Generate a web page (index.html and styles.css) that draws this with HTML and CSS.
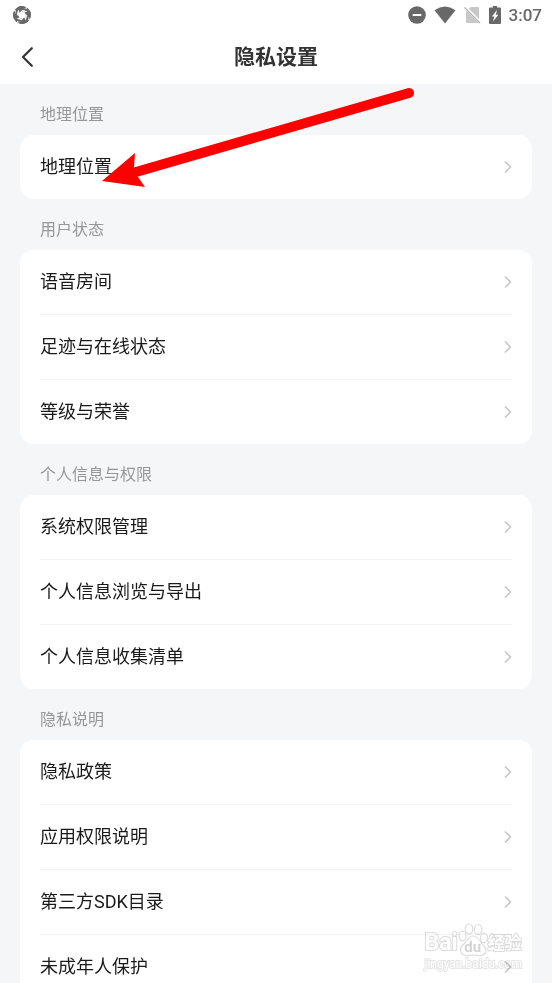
FILE: index.html
```
<!DOCTYPE html>
<html lang="zh-CN">
<head>
    <meta charset="UTF-8">
    <meta name="viewport" content="width=device-width, initial-scale=1.0">
    <title>隐私设置</title>
    <link rel="stylesheet" href="styles.css">
</head>
<body>

    <!-- Shared icons -->
    <svg class="icon-defs" aria-hidden="true">
        <symbol id="chevron" viewBox="0 0 8 12">
            <path d="M1.5 1 6.5 6 1.5 11" fill="none" stroke="currentColor" stroke-width="1.7" stroke-linecap="round" stroke-linejoin="round"/>
        </symbol>
    </svg>

    <!-- Status Bar -->
    <div class="status-bar">
        <svg class="status-app" viewBox="0 0 18 18" width="18" height="18">
            <circle cx="9" cy="9" r="9" fill="#686868"/>
            <path d="M6 5 13 6 12 13 5 12Z" fill="#fff"/>
            <g fill="none" stroke="#fff" stroke-width="1.500">
                <path d="M5.500 12Q3.500 6 7.500 3Q10 1.500 14 2"/>
                <path d="M5.500 12Q3.500 6 7.500 3Q10 1.500 14 2" transform="rotate(90 9 9)"/>
                <path d="M5.500 12Q3.500 6 7.500 3Q10 1.500 14 2" transform="rotate(180 9 9)"/>
                <path d="M5.500 12Q3.500 6 7.500 3Q10 1.500 14 2" transform="rotate(270 9 9)"/>
            </g>
            <g fill="#686868">
                <path d="M4.500 1.500Q9-1.500 13.500 2Q9 2.500 8 5.500L6.500 6.500Q5.500 3 4.500 1.500Z"/>
                <path d="M4.500 1.500Q9-1.500 13.500 2Q9 2.500 8 5.500L6.500 6.500Q5.500 3 4.500 1.500Z" transform="rotate(90 9 9)"/>
                <path d="M4.500 1.500Q9-1.500 13.500 2Q9 2.500 8 5.500L6.500 6.500Q5.500 3 4.500 1.500Z" transform="rotate(180 9 9)"/>
                <path d="M4.500 1.500Q9-1.500 13.500 2Q9 2.500 8 5.500L6.500 6.500Q5.500 3 4.500 1.500Z" transform="rotate(270 9 9)"/>
            </g>
        </svg>
        <div class="status-icons">
            <svg viewBox="0 0 18 18" width="18" height="18">
                <circle cx="9" cy="9" r="8.800" fill="#686868"/>
                <path d="M4.700 9h8.600" stroke="#fff" stroke-width="2"/>
            </svg>
            <svg viewBox="0 0 22 18" width="22" height="18">
                <path d="M.5 4.200Q11-3.200 21.500 4.200L11 17.500Z" fill="#686868"/>
            </svg>
            <svg viewBox="0 0 17 18" width="17" height="18">
                <path d="M6.500 1H14Q15 1 15 2V16Q15 17 14 17H3Q2 17 2 16V5.500Z" fill="#c8c8c8"/>
                <path d="M.5.500 17 17" stroke="#fff" stroke-width="3"/>
                <path d="M.5 1.500 16 17" stroke="#b4b4b4" stroke-width="1.300"/>
            </svg>
            <svg viewBox="0 0 12 18" width="12" height="18">
                <path d="M4 0H8V1.500H11Q12 1.500 12 2.500V17Q12 18 11 18H1Q0 18 0 17V2.500Q0 1.500 1 1.500H4Z" fill="#686868"/>
                <path d="M8 4 2.800 10.500H5.300L4 15.500 9.400 8.800H6.900Z" fill="#fff"/>
            </svg>
            <span class="status-time">3:07</span>
        </div>
    </div>

    <!-- Title Bar -->
    <header class="title-bar">
        <button class="back-button" type="button" aria-label="返回">
            <svg viewBox="0 0 12 20" width="12" height="20">
                <path d="M10.800 1.200 2 10 10.800 18.800" fill="none" stroke="#333" stroke-width="2.200" stroke-linecap="round" stroke-linejoin="round"/>
            </svg>
        </button>
        <h1>隐私设置</h1>
    </header>

    <!-- Settings List -->
    <main class="content">
        <h2>地理位置</h2>
        <div class="card">
            <a class="row" href="#location">地理位置<svg class="chevron"><use href="#chevron"/></svg></a>
        </div>

        <h2>用户状态</h2>
        <div class="card">
            <a class="row" href="#voice-room">语音房间<svg class="chevron"><use href="#chevron"/></svg></a>
            <a class="row" href="#online-status">足迹与在线状态<svg class="chevron"><use href="#chevron"/></svg></a>
            <a class="row" href="#level">等级与荣誉<svg class="chevron"><use href="#chevron"/></svg></a>
        </div>

        <h2>个人信息与权限</h2>
        <div class="card">
            <a class="row" href="#permissions">系统权限管理<svg class="chevron"><use href="#chevron"/></svg></a>
            <a class="row" href="#export">个人信息浏览与导出<svg class="chevron"><use href="#chevron"/></svg></a>
            <a class="row" href="#collection">个人信息收集清单<svg class="chevron"><use href="#chevron"/></svg></a>
        </div>

        <h2>隐私说明</h2>
        <div class="card">
            <a class="row" href="#policy">隐私政策<svg class="chevron"><use href="#chevron"/></svg></a>
            <a class="row" href="#permission-notes">应用权限说明<svg class="chevron"><use href="#chevron"/></svg></a>
            <a class="row" href="#sdk">第三方SDK目录<svg class="chevron"><use href="#chevron"/></svg></a>
            <a class="row" href="#minors">未成年人保护<svg class="chevron"><use href="#chevron"/></svg></a>
        </div>
    </main>

    <!-- Arrow pointing at the location row -->
    <svg class="arrow" viewBox="0 0 314 102" width="314" height="102" aria-hidden="true">
        <path d="M34 86 307 7" stroke="#f00" stroke-width="10" stroke-linecap="round"/>
        <path d="M0 95 33 67 32 81 36 91 43 101Z" fill="#f00"/>
    </svg>

    <!-- Watermark -->
    <div class="watermark">
        <div class="watermark-logo">
            <span>Bai</span>
            <span class="paw">
                <svg viewBox="0 0 30 34" width="30" height="34" aria-hidden="true">
                    <g fill="#fff" stroke="#dcdcdc" stroke-width="1.200">
                        <ellipse cx="4.500" cy="13" rx="3.500" ry="4.800"/>
                        <ellipse cx="11" cy="6" rx="3.800" ry="5"/>
                        <ellipse cx="20" cy="6.500" rx="3.800" ry="5"/>
                        <ellipse cx="26" cy="15" rx="3.500" ry="4.800"/>
                        <path d="M15 13C10 13 9 19 5 22C1 25 2 32 8 32.500C11 33 13 32 15 32C18 32 20 33 23 32.500C29 32 29 26 26 23C22 19 21 13 15 13Z"/>
                    </g>
                </svg>
                <span class="paw-text">du</span>
            </span>
            <span class="watermark-name">经验</span>
        </div>
        <div class="watermark-url">jingyan.baidu.com</div>
    </div>

</body>
</html>
```

FILE: styles.css
```
body {font-family: Roboto, "Noto Sans CJK SC", sans-serif;margin: 0;height: 100vh;display: flex;flex-direction: column;position: relative;overflow: hidden;background-color: #f5f6f8;color: #1a1a1a;}
*, *::before, *::after {box-sizing: border-box;}
.icon-defs {display: none;}
.status-bar {display: flex;justify-content: space-between;align-items: center;height: 30px;padding: 0 10px 0 13px;background-color: #fff;flex-shrink: 0;}
.status-icons {display: flex;align-items: center;gap: 8px;}
.status-time {font-size: 17px;line-height: 20px;font-weight: 500;color: #686868;}
.title-bar {display: grid;grid-template-columns: 54px 1fr 54px;align-items: center;height: 54px;background-color: #fff;flex-shrink: 0;}
.title-bar h1 {margin: 0;font-size: 21px;line-height: 32px;font-weight: 700;text-align: center;color: #333;}
.back-button {display: flex;align-items: center;justify-content: center;height: 44px;padding: 0;border: none;background: none;cursor: pointer;}
.content {flex: 1;min-height: 0;padding: 0 20px;overflow-y: auto;scrollbar-width: none;}
.content h2 {margin: 0;padding: 19px 20px 8px;font-size: 16px;line-height: 24px;font-weight: 400;color: #969799;}
.card {padding: 0 20px;border-radius: 14px;background-color: #fff;}
.row {display: flex;align-items: center;justify-content: space-between;height: 64px;font-size: 18px;line-height: 28px;color: #1a1a1a;text-decoration: none;}
.row + .row {height: 65px;border-top: 1px solid #f4f4f4;}
.chevron {width: 8px;height: 12px;color: #c8c8c8;}
.arrow {position: absolute;top: 86px;left: 102px;pointer-events: none;}
.watermark {position: absolute;right: 30px;bottom: 12px;color: #fff;mix-blend-mode: multiply;pointer-events: none;}
.watermark-logo {display: flex;align-items: flex-end;font-size: 23px;line-height: 28px;font-weight: 700;-webkit-text-stroke: 2px #dcdcdc;paint-order: stroke fill;}
.watermark-name {font-size: 17px;}
.paw {display: grid;height: 34px;}
.paw svg, .paw-text {grid-area: 1 / 1;paint-order: normal;}
.paw-text {align-self: end;text-align: center;font-size: 15px;line-height: 20px;color: #d4d4d4;-webkit-text-stroke: 0;}
.watermark-url {font-size: 12px;line-height: 14px;text-align: right;-webkit-text-stroke: 2px #e6e6e6;paint-order: stroke fill;}
```
